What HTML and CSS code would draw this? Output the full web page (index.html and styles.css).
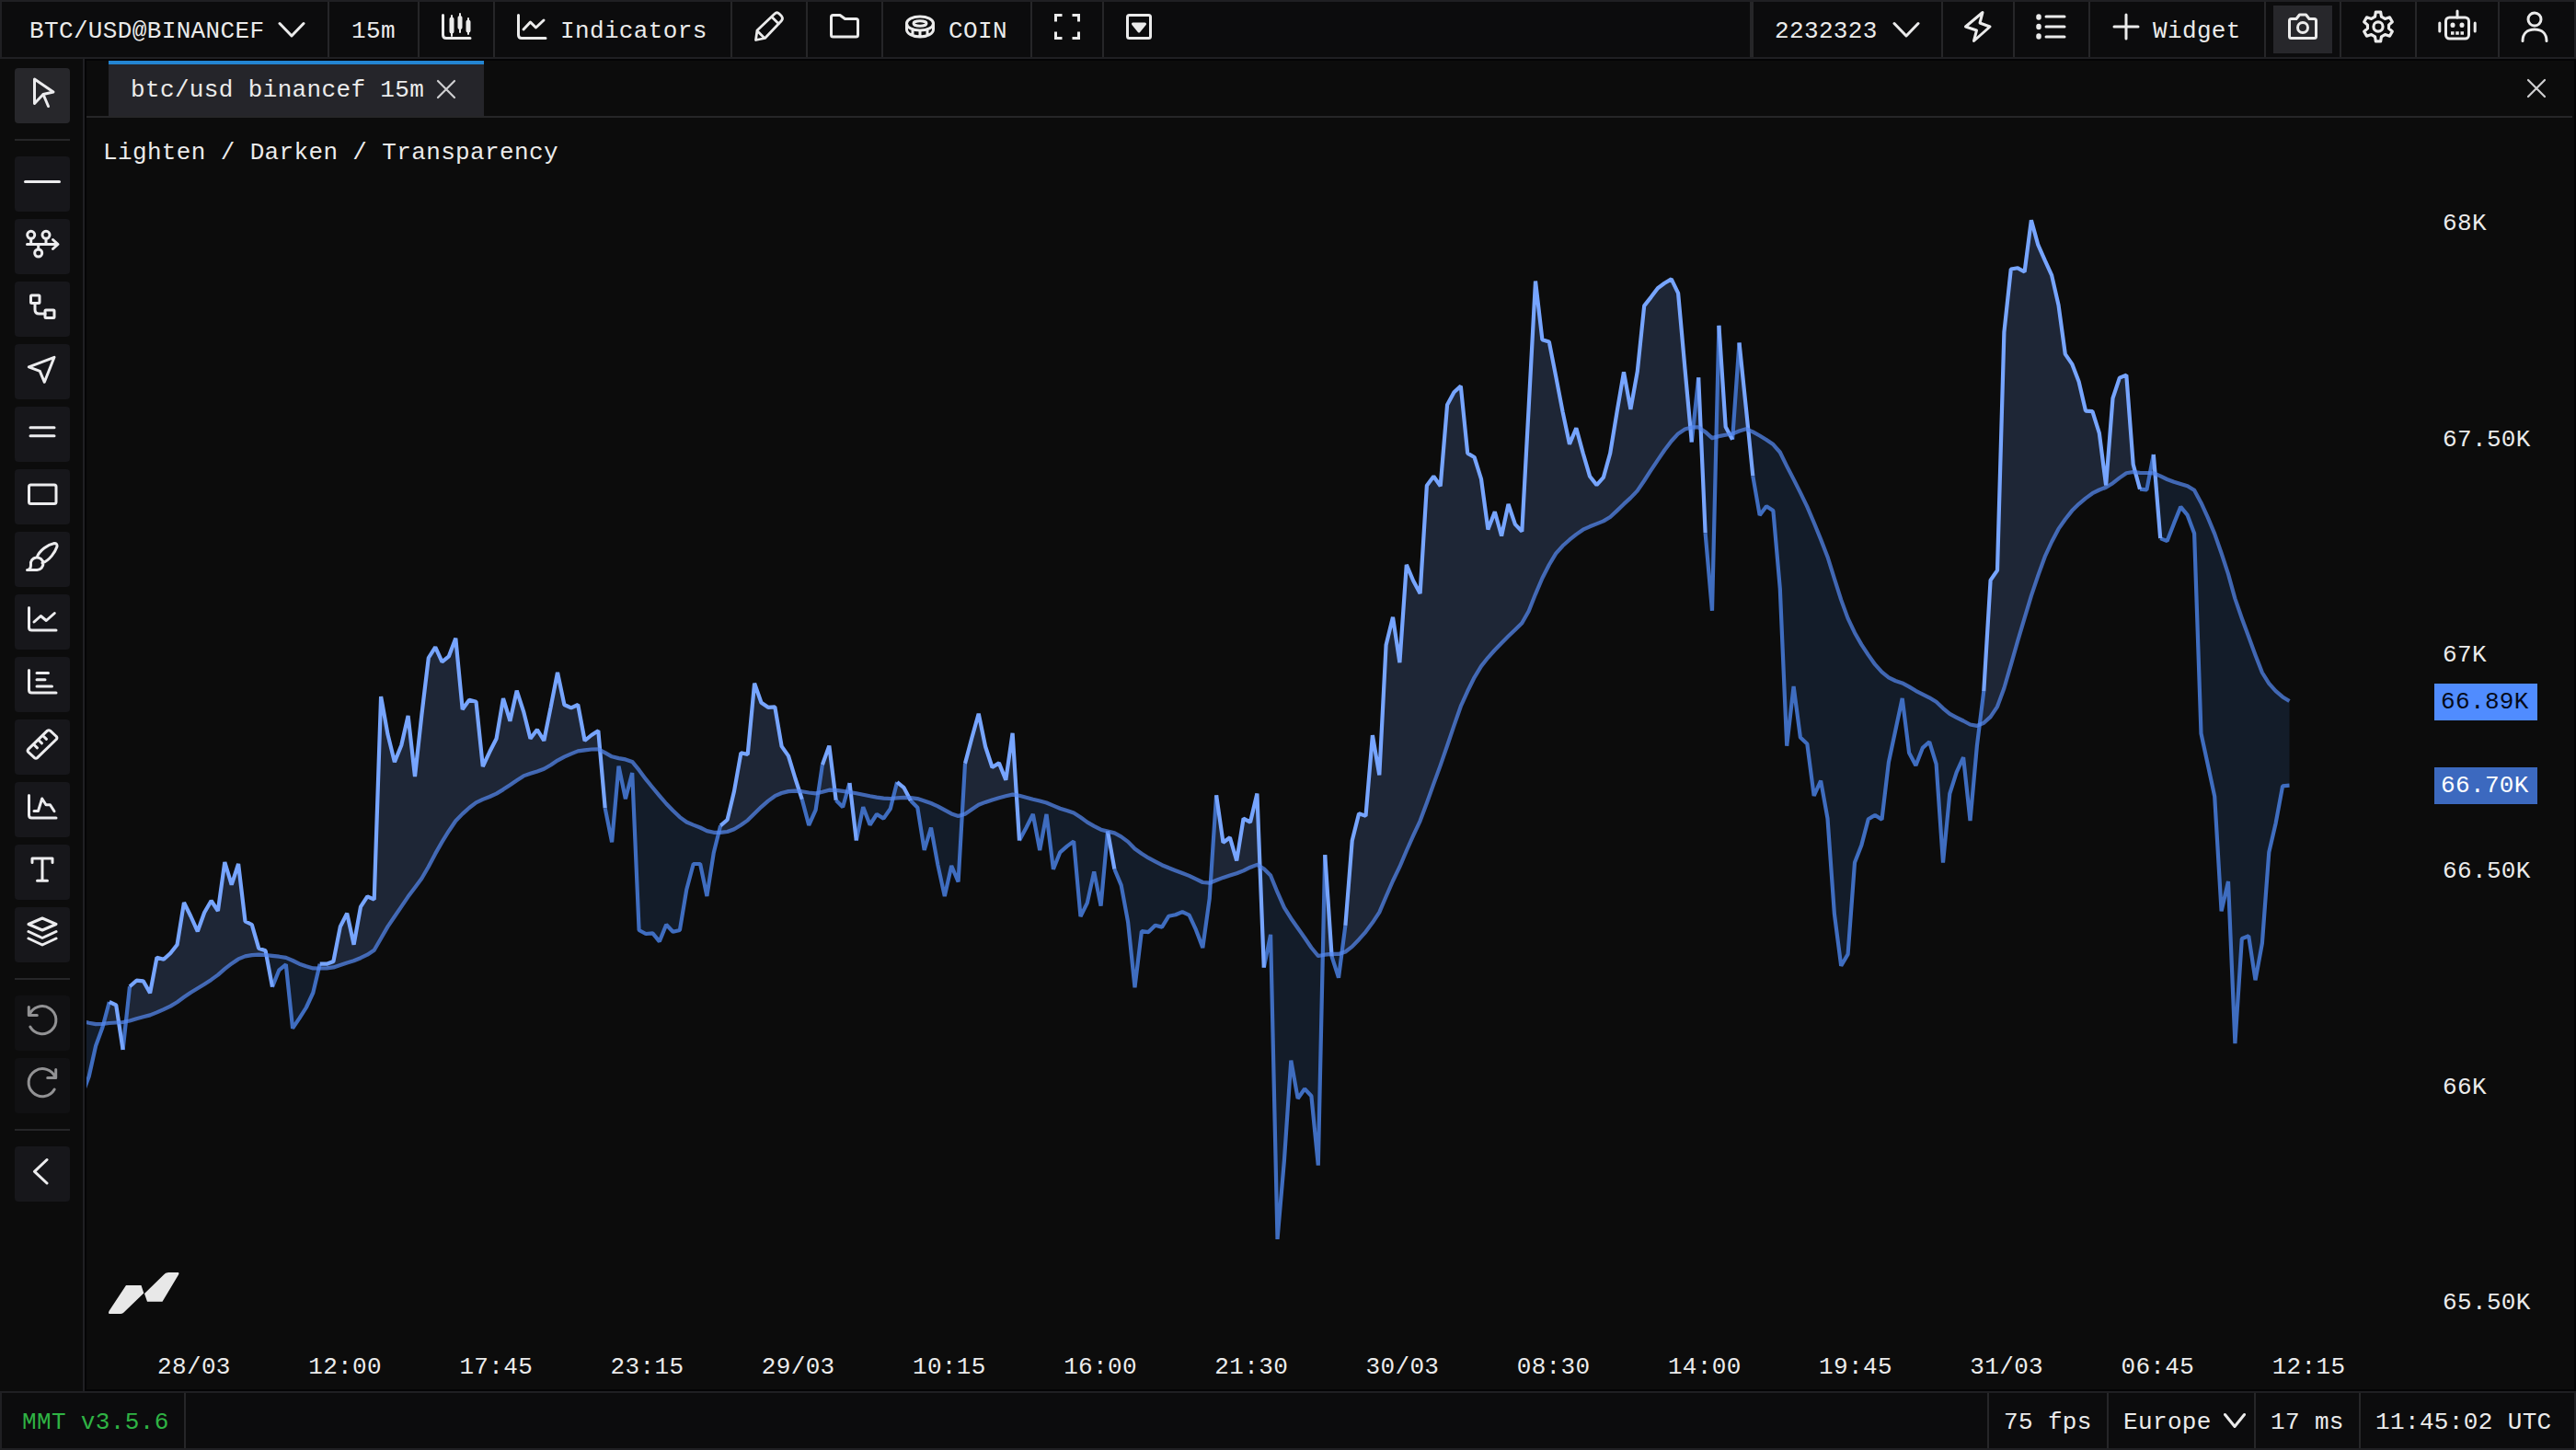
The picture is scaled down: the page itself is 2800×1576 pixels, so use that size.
FILE: index.html
```html
<!DOCTYPE html>
<html lang="en">
<head>
<meta charset="utf-8">
<title>BTC/USD@BINANCEF 15m</title>
<link rel="stylesheet" href="styles.css">
</head>
<body>
<div class="app">
  <header class="topbar">
    <div class="cell w-symbol"><span class="label">BTC/USD@BINANCEF</span><svg class="chev" viewBox="0 0 30 20"><path d="M2 3.5 15 17 28 3.5"/></svg></div>
    <div class="cell w-98 center"><span class="label">15m</span></div>
    <div class="cell w-82 center"><svg class="icon" viewBox="0 0 44 44"><path d="M7.500 9.500V31q0 3.500 3.500 3.500H37"/><path d="M17 10v22M26 8v20M35 13v17" stroke-width="2"/><path d="M17 14v13M26 12.500v10M35 17v9" stroke-width="5"/></svg></div>
    <div class="cell w-indicators"><svg class="icon" viewBox="0 0 44 44"><path d="M7.500 9.500V31q0 3.500 3.500 3.500H37M13 25l7.500-8 6 6L35 15"/></svg><span class="label">Indicators</span></div>
    <div class="cell w-82 center"><svg class="icon" viewBox="0 0 44 44"><path d="M7.500 36.500l1.500-10.500L28 8q2.500-2.500 5 0l2.500 2.500q2 2.500 0 5L17.500 34.500zM25 11.500l7.500 7.500M9 26.500l8 8" stroke-width="2.800"/></svg></div>
    <div class="cell w-82 center"><svg class="icon" viewBox="0 0 44 44"><path d="M7.500 11.500q0-2 2-2h7.500l5.500 4h12q2 0 2 2V31q0 2-2 2h-25q-2 0-2-2z"/></svg></div>
    <div class="cell w-coin"><svg class="icon" viewBox="0 0 44 44"><ellipse cx="22" cy="18.500" rx="14.500" ry="7.500"/><ellipse cx="22" cy="18.500" rx="7" ry="2.700"/><path d="M7.500 18.500V25c0 4.500 6.500 8 14.500 8s14.500-3.500 14.500-8v-6.500M14 26v5.500M22 26.500V33M30 26v5.500"/></svg><span class="label">COIN</span></div>
    <div class="cell w-78 center"><svg class="icon" viewBox="0 0 44 44"><path d="M9.500 16.500v-7h7M27.500 9.500h7v7M34.500 27.500v7h-7M16.500 34.500h-7v-7" stroke-linejoin="miter" stroke-linecap="butt"/></svg></div>
    <div class="cell fill"><svg class="icon" viewBox="0 0 44 44"><rect x="9.500" y="9.500" width="25" height="25" rx="2"/><path d="M15.500 19h13L22 27z" fill="currentColor"/></svg></div>
    <div class="cell w-layout"><span class="label">2232323</span><svg class="chev" viewBox="0 0 30 20"><path d="M2 3.500 15 17 28 3.500"/></svg></div>
    <div class="cell w-78 center"><svg class="icon" viewBox="0 0 44 44"><path d="M27 6.500 24 18l11 4L17.500 37.500 20.500 26l-12-4z"/></svg></div>
    <div class="cell w-82 center"><svg class="icon" viewBox="0 0 44 44"><path d="M16 11h20M16 22h20M16 33h20"/><path d="M8 11v1M8 21.500v1M8 32v1" stroke-width="5.500" /></svg></div>
    <div class="cell w-widget"><svg class="icon" viewBox="0 0 44 44"><path d="M22 9v26M9 22h26"/></svg><span class="label">Widget</span></div>
    <div class="cell w-82 center"><span class="pressed"><svg class="icon" viewBox="0 0 44 44"><path d="M7.500 15.500q0-2 2-2h5.500l3.500-4.500h7L29 13.500h5.500q2 0 2 2v17q0 2-2 2h-25q-2 0-2-2z"/><circle cx="22" cy="23" r="5.500"/></svg></span></div>
    <div class="cell w-82 center"><svg class="icon" viewBox="1.200 1.200 41.600 41.600"><circle cx="22" cy="22" r="4.800"/><path d="M18.700 11.800 19.500 7h5l.8 4.800 3.700 2.100 4.800-1.500 2.700 4.600-3.600 3.200v3.600l3.600 3.200-2.700 4.600-4.800-1.500-3.700 2.100-.8 4.800h-5l-.8-4.800-3.700-2.100-4.800 1.500L7.500 27l3.600-3.200v-3.600L7.500 17l2.700-4.600 4.800 1.500z"/></svg></div>
    <div class="cell w-90 center"><svg class="icon" viewBox="0 0 44 44"><path d="M22 5v7M2.800 18v9M41.200 18v9"/><rect x="9.500" y="12" width="25" height="23" rx="4"/><path d="M17 20v.5M27 20v.5" stroke-width="5"/><path d="M15 29h14" stroke-width="3.500" stroke-dasharray="3.500 1.750" stroke-linecap="butt"/></svg></div>
    <div class="cell w-profile center"><svg class="icon" viewBox="0 0 44 44"><circle cx="22" cy="14" r="7"/><path d="M9 37.500c0-8 5-12.500 13-12.500s13 4.500 13 12.500"/></svg></div>
  </header>

  <div class="middle">
    <nav class="tools">
      <button class="tool active"><svg viewBox="0 0 60 60"><path d="M21.500 12 42 26 31 28.500 21.500 38.500zM31 28.500 36.500 41.500"/></svg></button>
      <hr>
      <button class="tool"><svg viewBox="0 0 60 60"><path d="M11.500 27.500h37"/></svg></button>
      <button class="tool"><svg viewBox="0 0 60 60"><path d="M13.500 27.500h33M41.500 22.500l5.500 5-5.500 5M17.700 21.500v6M34 21.500v6M25.700 27.500v5.500"/><circle cx="17.700" cy="17.300" r="4"/><circle cx="34" cy="17.300" r="4"/><circle cx="25.700" cy="37" r="4"/></svg></button>
      <button class="tool"><svg viewBox="0 0 60 60"><rect x="17.500" y="15" width="9.500" height="8.500" rx="1"/><rect x="33" y="31" width="10" height="8.500" rx="1"/><path d="M22 23.500v7q0 4.500 4.500 4.500H33"/></svg></button>
      <button class="tool"><svg viewBox="0 0 60 60"><path d="M43 14.300 32.300 41.300 27.300 29.300 15.300 24.800z"/></svg></button>
      <button class="tool"><svg viewBox="0 0 60 60"><path d="M17 22.800h26M17 31.700h26"/></svg></button>
      <button class="tool"><svg viewBox="0 0 60 60"><rect x="15.500" y="17" width="29.500" height="20.500" rx="2"/></svg></button>
      <button class="tool"><svg viewBox="0 0 60 60"><path d="M24 28C27 20 36 14 43 12.500q3.500 0 3 3.500C44 22 38 31 30 34M13.500 41.500q4 0 4-5.500a6.800 6.800 0 1 1 6.800 5.500z"/></svg></button>
      <button class="tool"><svg viewBox="0 0 60 60"><path d="M15.500 14.500V36q0 3 3 3H45M21 30l7.300-6.500 6 5L43.300 20.500"/></svg></button>
      <button class="tool"><svg viewBox="0 0 60 60"><path d="M15.500 14.500V36q0 3 3 3H45M24 17.500h12.500M24 24.700h9M24 32h16.500"/></svg></button>
      <button class="tool"><svg viewBox="0 0 60 60"><path d="M35.500 12.200q1.500-1 3 0l6.800 6.300q1.200 1.500 0 3L24.500 41.700q-1.500 1-3 0l-6.800-6.300q-1.200-1.500 0-3zM20.500 27l4 3.800M25.500 22l4 3.800M30.500 17.500l4 3.800" /></svg></button>
      <button class="tool"><svg viewBox="0 0 60 60"><path d="M15.500 14.500V36q0 3 3 3H45M21 31.500h4.500l4.200-13.500 4.300 6.700h4.500l4.500 7"/></svg></button>
      <button class="tool"><svg viewBox="0 0 60 60"><path d="M19 19.500V15h22v4.500M30 15v24.300M24.500 39.300h11"/></svg></button>
      <button class="tool"><svg viewBox="0 0 60 60"><path d="M30 12 45 18.500 30 25 15 18.500zM15 26.500 30 33.500 45 26.500M15 34 30 41 45 34"/></svg></button>
      <hr>
      <button class="tool off"><svg viewBox="0 0 60 60"><path d="M15.300 12.500v9h9M15.800 21.500A15 15 0 1 1 16.800 34"/></svg></button>
      <button class="tool off"><svg viewBox="0 0 60 60"><path d="M44.700 12.500v9h-9M44.200 21.500A15 15 0 1 0 43.200 34"/></svg></button>
      <hr>
      <button class="tool"><svg viewBox="0 0 60 60"><path d="M35 14.500 21.500 27.300 35 40"/></svg></button>
    </nav>

    <main class="panel">
      <div class="tabs">
        <div class="tab"><span>btc/usd binancef 15m</span><svg class="close" viewBox="0 0 22 22"><path d="M2 2 20 20M20 2 2 20"/></svg></div>
        <svg class="close" viewBox="0 0 22 22"><path d="M2 2 20 20M20 2 2 20"/></svg>
      </div>
      <div class="chart">
        <svg class="plot" id="plot" viewBox="94 128 2536 1322"></svg>
        <div class="prices">
          <span>68K</span><span>67.50K</span><span>67K</span><span>66.50K</span><span>66K</span><span>65.50K</span>
          <b class="badge average">66.89K</b>
          <b class="badge last">66.70K</b>
        </div>
        <div class="legend">Lighten / Darken / Transparency</div>
        <svg class="logo" viewBox="117 1382 80 48"><path d="M137 1397H153.500L156.300 1405.500 134 1427q-1.500 1-3 1H118.500q-1-1 0-3zM157 1406 178 1385.500q1.500-2.500 5-2.500h11q1 1 0 2.500L176.500 1414.700H160z"/></svg>
      </div>
      <div class="times">
        <span>28/03</span><span>12:00</span><span>17:45</span><span>23:15</span><span>29/03</span><span>10:15</span><span>16:00</span><span>21:30</span><span>30/03</span><span>08:30</span><span>14:00</span><span>19:45</span><span>31/03</span><span>06:45</span><span>12:15</span>
      </div>
    </main>
  </div>

  <footer class="status">
    <div class="cell fill"><span class="version">MMT v3.5.6</span></div>
    <div class="cell w-fps"><span>75 fps</span></div>
    <div class="cell w-region"><span>Europe</span><svg class="chev small" viewBox="0 0 24 18"><path d="M1.500 2.500 12 15.500 22.500 2.500"/></svg></div>
    <div class="cell w-ping"><span>17 ms</span></div>
    <div class="cell w-clock"><span>11:45:02 UTC</span></div>
  </footer>
</div>
<script src="chart.js"></script>
</body>
</html>
```
FILE: styles.css
```css
* { box-sizing: border-box; }

body {
  margin: 0;
  background: #0c0c0c;
  color: #ebebeb;
  font: 26px/36px "Liberation Mono", monospace;
  letter-spacing: 0.36px;
  white-space: nowrap;
}

svg {
  flex: none;
  fill: none;
  stroke: currentColor;
  stroke-width: 3;
  stroke-linecap: round;
  stroke-linejoin: round;
}

.app {
  display: flex;
  flex-direction: column;
  width: 2800px;
  height: 1576px;
  overflow: hidden;
}

/* bars */
.topbar, .status {
  display: flex;
  flex: none;
  height: 64px;
  border: 2px solid #202023;
  background: #0c0c0d;
}
.cell {
  display: flex;
  flex: none;
  align-items: center;
  border-right: 2px solid #262628;
}
.cell:last-child { border-right: 0; }
.center { justify-content: center; }
.fill { flex: 1; padding-left: 16px; }
.label { padding-top: 4px; }
.icon { width: 44px; height: 44px; margin-bottom: 6px; }
.chev { width: 30px; height: 20px; }
.pressed {
  display: flex;
  justify-content: center;
  align-items: center;
  width: 64px;
  height: 52px;
  background: #27272b;
}

.w-symbol { width: 356px; padding-left: 30px; gap: 15px; }
.w-98 { width: 98px; }
.w-82 { width: 82px; }
.w-78 { width: 78px; }
.w-90 { width: 90px; }
.w-profile { width: 81px; padding-right: 6px; }
.w-indicators { width: 258px; padding-left: 18px; gap: 9px; }
.w-coin { width: 162px; padding-left: 18px; gap: 9px; }
.w-layout { width: 208px; padding-left: 23px; gap: 16px; border-left: 2px solid #262628; }
.w-widget { width: 191px; padding-left: 17px; gap: 7px; }

/* drawing tools */
.middle { display: flex; height: 1448px; }
.tools {
  display: flex;
  flex: none;
  flex-direction: column;
  gap: 8px;
  width: 92px;
  padding: 10px 14px 0 16px;
  border-right: 2px solid #202023;
}
.tools hr { width: 60px; height: 2px; margin: 9px 0; border: 0; background: #262628; }
.tool {
  flex: none;
  width: 60px;
  height: 60px;
  padding: 0;
  border: 0;
  border-radius: 4px;
  background: #17171b;
  color: #ececee;
}
.tool svg { display: block; width: 60px; height: 60px; }
.tool.active { background: #27272b; }
.tool.off { background: #111113; color: #929294; }

/* chart panel */
.panel {
  display: flex;
  flex: none;
  flex-direction: column;
  width: 2708px;
  padding-right: 2px;
  border: 2px solid #040405;
}
.tabs {
  display: flex;
  flex: none;
  justify-content: space-between;
  align-items: center;
  height: 62px;
  padding: 0 28px 0 24px;
  border-bottom: 2px solid #262628;
}
.tab {
  display: flex;
  align-items: center;
  gap: 13px;
  width: 408px;
  height: 60px;
  padding-left: 24px;
  border-top: 4px solid #2385d2;
  background: #25252a;
}
.tab .close { margin-bottom: 3px; }
.close { width: 22px; height: 22px; stroke-width: 2.2; color: #cfcfd1; }

.chart { position: relative; display: flex; flex: none; height: 1322px; }
.plot { display: block; width: 2536px; height: 1322px; }
.plot path { stroke-linecap: butt; stroke-linejoin: bevel; stroke-width: 4.2; }
.plot .area-up { fill: #1e2636; stroke: none; }
.plot .area-down { fill: #131c29; stroke: none; }
.plot .line-up { stroke: #77a5ff; }
.plot .line-down { stroke: #3f6dc0; }
.plot .average { stroke: #5588ee; stroke-opacity: 0.72; stroke-linejoin: round; }

.prices {
  position: relative;
  display: flex;
  flex-direction: column;
  width: 168px;
  margin-top: -3px;
  padding-left: 25px;
}
.prices span { flex: none; height: 234.7px; line-height: 236px; }
.badge {
  position: absolute;
  left: 16px;
  width: 112px;
  height: 40px;
  padding-left: 7px;
  font-weight: normal;
  line-height: 41px;
}
.badge.average { top: 618px; background: #508cff; color: #050a1a; }
.badge.last { top: 709px; background: #3c69bf; color: #fff; }
.legend { position: absolute; left: 18px; top: 20px; }
.logo { position: absolute; left: 23px; top: 1254px; width: 80px; height: 48px; fill: #e8e8e8; stroke: none; }

.times { display: flex; flex: none; height: 60px; padding: 18px 0 0 77px; }
.times span { flex: none; width: 164.2px; }

/* status bar */
.status .cell { gap: 13px; }
.status .cell span { padding-top: 3px; }
.status .version {
  display: flex;
  align-items: center;
  width: 184px;
  height: 60px;
  padding-left: 6px;
  border-right: 2px solid #262628;
  color: #2fb344;
}
.w-fps { width: 130px; padding-left: 16px; }
.w-region { width: 160px; padding-left: 16px; }
.w-ping { width: 114px; padding-left: 16px; }
.w-clock { width: 232px; padding-left: 16px; }
.chev.small { width: 24px; height: 18px; }
```
FILE: chart.js
```js
// Price per bar, in runs; each run has its own vertical origin and scale.
const priceRuns = [
  { top: 660, scale: 3, values: [1590,1530,1430,1370,1287,1297,1443,1237,1217,1219,1258,1142,1148,1128,1100,963,1008,1057,995,957,990,831,905,837,1024,1035,1112,1120,1238,1183,1165,1373,1340,1305,1257,1163,1163,1155,1042,998,1100,977,943,953,291,415,505,450,354,552,350,165,130,178,160,101,333,302,308,519,472,428,297,371,272,340,428,399,435,325,213,318,328,318,435,417,403,655,766,518,625,540,1053,1065,1063,1090,1035,1058,1053,920,837,837,942,800,712,693,600,475,480,248] },
  { top: 660, scale: 2.1778, values: [226,237,236,329,352,405,455,516,480,373,328,457,473,416,552,473,515,490,500,477,414,427,458,474,575,522,610,684,612,650,370,310,252,330,379,369,409,298,552,522,490,575,490,620,580,566,554,732,700,626,707,530,620,658,745,900,767,769,753,757,731,728,721,729,763,806,690,445,557,545,600,500,509,441,853,775,1496,1310,1073,1163,1140,1157,1321,586,827,877,753] },
  { top: 220, scale: 1.8233, values: [1265,1211,1216,1056,1135,877,822,912,718,750,775,561,543,562,401,376,364,497,505,548,648,613,661,598,638,652,405,156,272,276,345,415,479,447,497,543,560,545,497,415,336,410,335,205,188,170,160,152,180,330,475,347,655,809,244,445,470,278,408,542,620,602,611,765,1077,959,1060,1073,1176,1146] },
  { top: 220, scale: 1.6681, values: [1117,1290,1384,1363,1197,1165,1118,1111,1119,1015,957,899,998,1021,989,978,1018,1197,1072,1033,1006,1121,985,886,685,667,235,121,119,126,32,77,105,132,186,275,293,325,378,379,418,513,355,318,313,475,520,521,457,609,614,582,552,567,600,963,1020,1077,1285,1231,1525,1335,1330,1410,1343,1178,1125,1058,1057] }
];

// Moving average knots as x, y pairs, in runs with their own origin and scale.
const averageRuns = [
  { left: 80, top: 660, sx: 1.96, sy: 3, knots: [18,1350,27,1353,50,1361,80,1355,112,1353,140,1338,165,1330,215,1295,245,1260,270,1238,305,1203,325,1175,350,1147,370,1135,400,1132,430,1138,455,1142,480,1163,510,1178,550,1177,580,1160,600,1152,640,1123,665,1050,690,995,715,938,740,890,755,850,775,790,795,740,815,693,838,660,858,635,898,611,920,590,960,548,1005,527,1035,495,1075,468,1118,461,1148,489,1190,500,1220,563,1260,637,1300,698,1335,718,1355,735,1385,735,1400,731,1435,698,1455,665] },
  { left: 800, top: 660, sx: 2.24, sy: 2.1778, knots: [90,448,120,436,150,434,195,442,230,431,285,439,330,448,370,454,405,450,440,452,485,467,520,487,547,498,590,467,630,454,675,442,725,455,755,462,790,477,825,487,855,509,890,528,920,533,950,549,970,572,1005,594,1040,612,1110,638,1140,654,1155,654,1175,643,1230,627,1269,607,1302,631,1320,680,1337,717,1385,783,1418,830,1440,819,1470,822,1490,814] },
  { left: 1400, top: 220, sx: 2.6133, sy: 1.8233, knots: [190,1470,222,1445,262,1406,290,1355,317,1318,345,1270,378,1223,408,1163,440,1103,465,1050,492,995,530,940,550,917,580,892,610,871,640,850,668,833,690,803,705,772,730,732,765,690,800,668,840,647,910,628,955,597,990,575,1030,532,1080,480,1110,456,1135,446,1170,444,1190,457,1207,472,1225,462,1260,460,1300,447,1345,464,1385,482,1400,495,1418,525,1445,560,1480,610,1535,705] },
  { left: 1900, top: 220, sx: 2.529, sy: 1.6681, knots: [225,655,250,710,280,765,310,800,345,835,375,857,400,867,425,871,465,887,515,903,540,920,555,928,590,939,620,951,640,949,665,935,687,915,705,880,740,798,780,710,815,643,850,594,890,559,915,543,955,523,990,516,1030,495,1045,487,1085,491,1115,490,1160,505,1225,517,1250,550,1283,600,1320,672,1340,723,1385,803,1415,857,1440,880,1465,895,1490,905] }
];

const firstX = 89.3;
const step = 7.382;
const price = priceRuns.flatMap(r => r.values.map(v => r.top + v / r.scale));
const xs = price.map((_, i) => firstX + i * step);

const knots = [];
for (const r of averageRuns) {
  for (let i = 0; i < r.knots.length; i += 2) {
    knots.push([r.left + r.knots[i] / r.sx, r.top + r.knots[i + 1] / r.sy]);
  }
}
function averageAt(x) {
  let k = 1;
  while (k < knots.length - 1 && knots[k][0] < x) k++;
  const [x0, y0] = knots[k - 1];
  const [x1, y1] = knots[k];
  return y0 + (y1 - y0) * (x - x0) / (x1 - x0);
}
const raw = xs.map(averageAt);
const average = raw.map((v, i) => i && i < raw.length - 1 ? (raw[i - 1] + 6 * v + raw[i + 1]) / 8 : v);

const pt = (x, y) => x.toFixed(1) + ' ' + y.toFixed(1);
let areaUp = '', areaDown = '', lineUp = '', lineDown = '';

// Areas: one polygon per stretch between crossings.
let edge = [[xs[0], price[0], average[0]]];
function closeArea() {
  const mid = edge[Math.floor(edge.length / 2)];
  const d = 'M' + edge.map(e => pt(e[0], e[1])).join('L') + 'L' +
    edge.slice().reverse().map(e => pt(e[0], e[2])).join('L') + 'Z';
  if (mid[1] < mid[2]) areaUp += d; else areaDown += d;
}
let previousUp = null;
for (let i = 0; i < price.length - 1; i++) {
  const a = price[i] - average[i];
  const b = price[i + 1] - average[i + 1];
  if (a * b < 0) {
    const t = a / (a - b);
    const x = xs[i] + t * step;
    const y = average[i] + t * (average[i + 1] - average[i]);
    edge.push([x, y, y]);
    closeArea();
    edge = [[x, y, y]];
  }
  edge.push([xs[i + 1], price[i + 1], average[i + 1]]);

  // A segment takes the colour of the bar it starts from.
  const up = a < 0;
  const piece = (up === previousUp ? 'L' : 'M' + pt(xs[i], price[i]) + 'L') + pt(xs[i + 1], price[i + 1]);
  if (up) lineUp += piece; else lineDown += piece;
  previousUp = up;
}
closeArea();

const averageLine = 'M' + xs.map((x, i) => pt(x, average[i])).join('L');
document.getElementById('plot').innerHTML =
  [['area-up', areaUp], ['area-down', areaDown], ['line-down', lineDown], ['line-up', lineUp], ['average', averageLine]]
    .map(([name, d]) => `<path class="${name}" d="${d}"/>`).join('');
```
